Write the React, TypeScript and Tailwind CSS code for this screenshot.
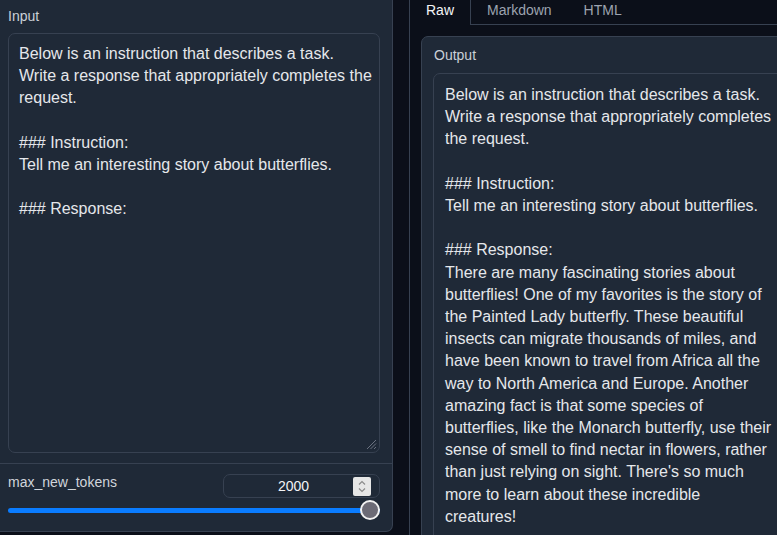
import React from "react";

const leftText = `Below is an instruction that describes a task.
Write a response that appropriately completes the
request.

### Instruction:
Tell me an interesting story about butterflies.

### Response:`;

const rightText = `Below is an instruction that describes a task.
Write a response that appropriately completes
the request.

### Instruction:
Tell me an interesting story about butterflies.

### Response:
There are many fascinating stories about
butterflies! One of my favorites is the story of
the Painted Lady butterfly. These beautiful
insects can migrate thousands of miles, and
have been known to travel from Africa all the
way to North America and Europe. Another
amazing fact is that some species of
butterflies, like the Monarch butterfly, use their
sense of smell to find nectar in flowers, rather
than just relying on sight. There's so much
more to learn about these incredible
creatures!`;

function ResizeHandle() {
  return (
    <svg
      className="absolute right-[2px] bottom-[2px]"
      width="11"
      height="11"
      viewBox="0 0 11 11"
    >
      <line x1="10" y1="1" x2="1" y2="10" stroke="#6b7280" strokeWidth="1" />
      <line x1="10" y1="4.5" x2="4.5" y2="10" stroke="#6b7280" strokeWidth="1" />
      <line x1="10" y1="8" x2="8" y2="10" stroke="#6b7280" strokeWidth="1" />
    </svg>
  );
}

function Spinner() {
  return (
    <div className="w-[18px] h-[19px] bg-[#e6e6e6] rounded-[2px] flex items-center justify-center">
      <svg width="10" height="15" viewBox="0 0 10 15">
        <polyline points="2,5.5 5,2.5 8,5.5" fill="none" stroke="#8b8b8b" strokeWidth="1.2" />
        <polyline points="2,9.5 5,12.5 8,9.5" fill="none" stroke="#8b8b8b" strokeWidth="1.2" />
      </svg>
    </div>
  );
}

export default function App() {
  return (
    <div
      className="w-[777px] h-[535px] overflow-hidden bg-[#0b0f19] text-[#e5e7eb]"
      style={{ fontFamily: '"Liberation Sans", Arial, Helvetica, sans-serif' }}
    >
      <div className="flex items-start w-[900px]">
        {/* Left panel */}
        <div className="w-[393px] shrink-0 bg-[#1f2937] border-r border-b border-[#374151] rounded-br-[7px]">
          {/* Input block */}
          <div className="pt-[6px] pl-[8px] pr-[12px] pb-[10px]">
            <div className="text-[14px] leading-[20px] text-[#cbd0d7] mb-[7px]">Input</div>
            <div className="relative h-[420px] border border-[#374151] rounded-[7px] bg-[#1f2937] pt-[9px] px-[10px]">
              <div className="whitespace-pre text-[16px] leading-[22.2px] text-[#e5e7eb]">{leftText}</div>
              <ResizeHandle />
            </div>
          </div>
          {/* Slider block */}
          <div className="border-t border-[#374151] pt-[10px] pl-[8px] pr-[12px] pb-[11px]">
            <div className="flex items-start justify-between">
              <div className="text-[14px] leading-[16px] text-[#d1d5db]">max_new_tokens</div>
              <div className="w-[157px] h-[24px] border border-[#374151] rounded-[7px] bg-[#1f2937] flex items-center pl-[10px] pr-[8px]">
                <div className="flex-1 text-center text-[14px] leading-[20px] text-[#f3f4f6]">2000</div>
                <Spinner />
              </div>
            </div>
            <div className="relative h-[20px] mt-[2px] flex items-center">
              <div className="w-full h-[5px] rounded-full bg-[#0a7cff]" />
              <div className="absolute right-0 top-0 w-[20px] h-[20px] rounded-full bg-[#6c6b76] border-2 border-[#f2f2f2]" />
            </div>
          </div>
        </div>

        {/* Right column: tabs */}
        <div className="ml-[16px] w-[440px] shrink-0 -mt-[10px]">
          <div className="flex border-b border-[#374151] h-[35px]">
            <div className="h-[35px] -mb-px px-4 border-t border-l border-r border-[#374151] bg-[#0b0f19] rounded-t-[6px] flex items-end pb-[5px] text-[14px] leading-[20px] text-[#f3f4f6]">
              Raw
            </div>
            <div className="h-[34px] px-4 flex items-end pb-[4px] text-[14px] leading-[20px] text-[#9ca3af]">
              Markdown
            </div>
            <div className="h-[34px] px-4 flex items-end pb-[4px] text-[14px] leading-[20px] text-[#9ca3af]">
              HTML
            </div>
          </div>
          <div className="border-l border-[#374151] pl-[11px] pt-[11px] h-[560px]">
            <div className="bg-[#1f2937] border border-[#374151] rounded-[7px] pt-[8px] px-[11px] h-[540px]">
              <div className="text-[14px] leading-[20px] text-[#cbd0d7] mb-[8px] pl-[1px]">Output</div>
              <div className="border border-[#374151] rounded-[7px] bg-[#1f2937] pt-[10px] px-[11px] h-[520px]">
                <div className="whitespace-pre text-[16px] leading-[22.2px] text-[#e5e7eb]">{rightText}</div>
              </div>
            </div>
          </div>
        </div>
      </div>
    </div>
  );
}
